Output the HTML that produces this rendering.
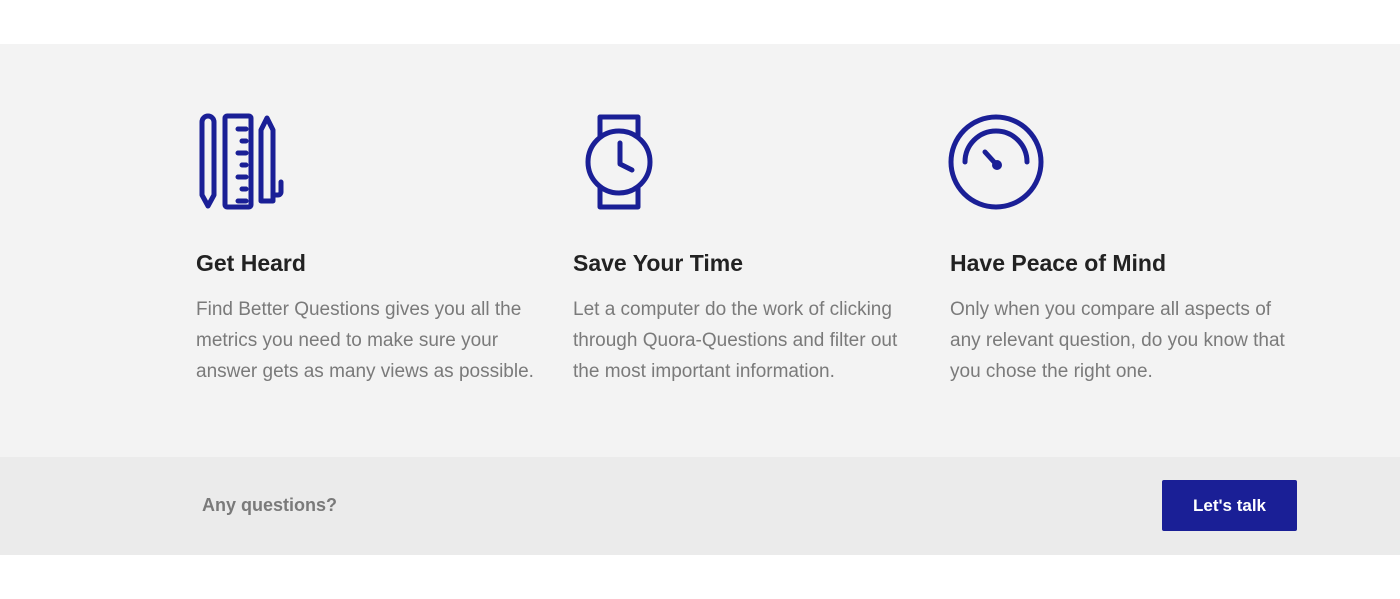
<!DOCTYPE html>
<html><head><style>
body{margin:0;width:1400px;height:599px;background:#fff;font-family:"Liberation Sans",sans-serif;position:relative;overflow:hidden}
.band{position:absolute;left:0;top:44px;width:1400px;height:413px;background:#f3f3f3}
.foot{position:absolute;left:0;top:457px;width:1400px;height:98px;background:#ebebeb}
h3{position:absolute;margin:0;font-size:23px;font-weight:bold;color:#222;top:250px}
p{position:absolute;margin:0;font-size:19px;line-height:31px;color:#7a7a7a;top:294px;width:345px}
.q{position:absolute;left:202px;top:495px;font-size:18px;font-weight:bold;color:#7a7a7a}
.btn{position:absolute;left:1162px;top:480px;width:135px;height:51px;background:#1a1f96;border-radius:2px;color:#fff;font-weight:bold;font-size:17px;text-align:center;line-height:51px}
svg{position:absolute;left:0;top:0}
</style></head><body>
<div class="band"></div><div class="foot"></div>
<svg width="1400" height="599" fill="none" stroke="#1a1f96" stroke-width="5" stroke-linejoin="round" stroke-linecap="round">
<path d="M202,122 a6,6 0 0 1 12,0 v73 l-6,11 l-6,-11 z"/>
<rect x="225" y="116" width="26" height="91" rx="2"/>
<path d="M238,129h8 M242,141h4 M238,153h8 M242,165h4 M238,177h8 M242,189h4 M238,201h8" />
<path d="M261,130 l6,-12 l6,12 v71 h-12 z M273,195 h5 a3,3 0 0 0 3,-3 v-10"/>
<rect x="600" y="117" width="38" height="90"/>
<circle cx="619" cy="162" r="31" fill="#f3f3f3"/>
<path d="M620,143 v21 l12,6"/>
<circle cx="996" cy="162" r="45"/>
<path d="M965,162 a31,31 0 0 1 62,0"/>
<path d="M985,152 l10,11" stroke-width="5"/>
<circle cx="997" cy="165" r="5" fill="#1a1f96" stroke="none"/>
</svg>
<h3 style="left:196px">Get Heard</h3>
<h3 style="left:573px">Save Your Time</h3>
<h3 style="left:950px">Have Peace of Mind</h3>
<p style="left:196px">Find Better Questions gives you all the metrics you need to make sure your answer gets as many views as possible.</p>
<p style="left:573px">Let a computer do the work of clicking through Quora-Questions and filter out the most important information.</p>
<p style="left:950px">Only when you compare all aspects of any relevant question, do you know that you chose the right one.</p>
<div class="q">Any questions?</div>
<div class="btn">Let's talk</div>
</body></html>
